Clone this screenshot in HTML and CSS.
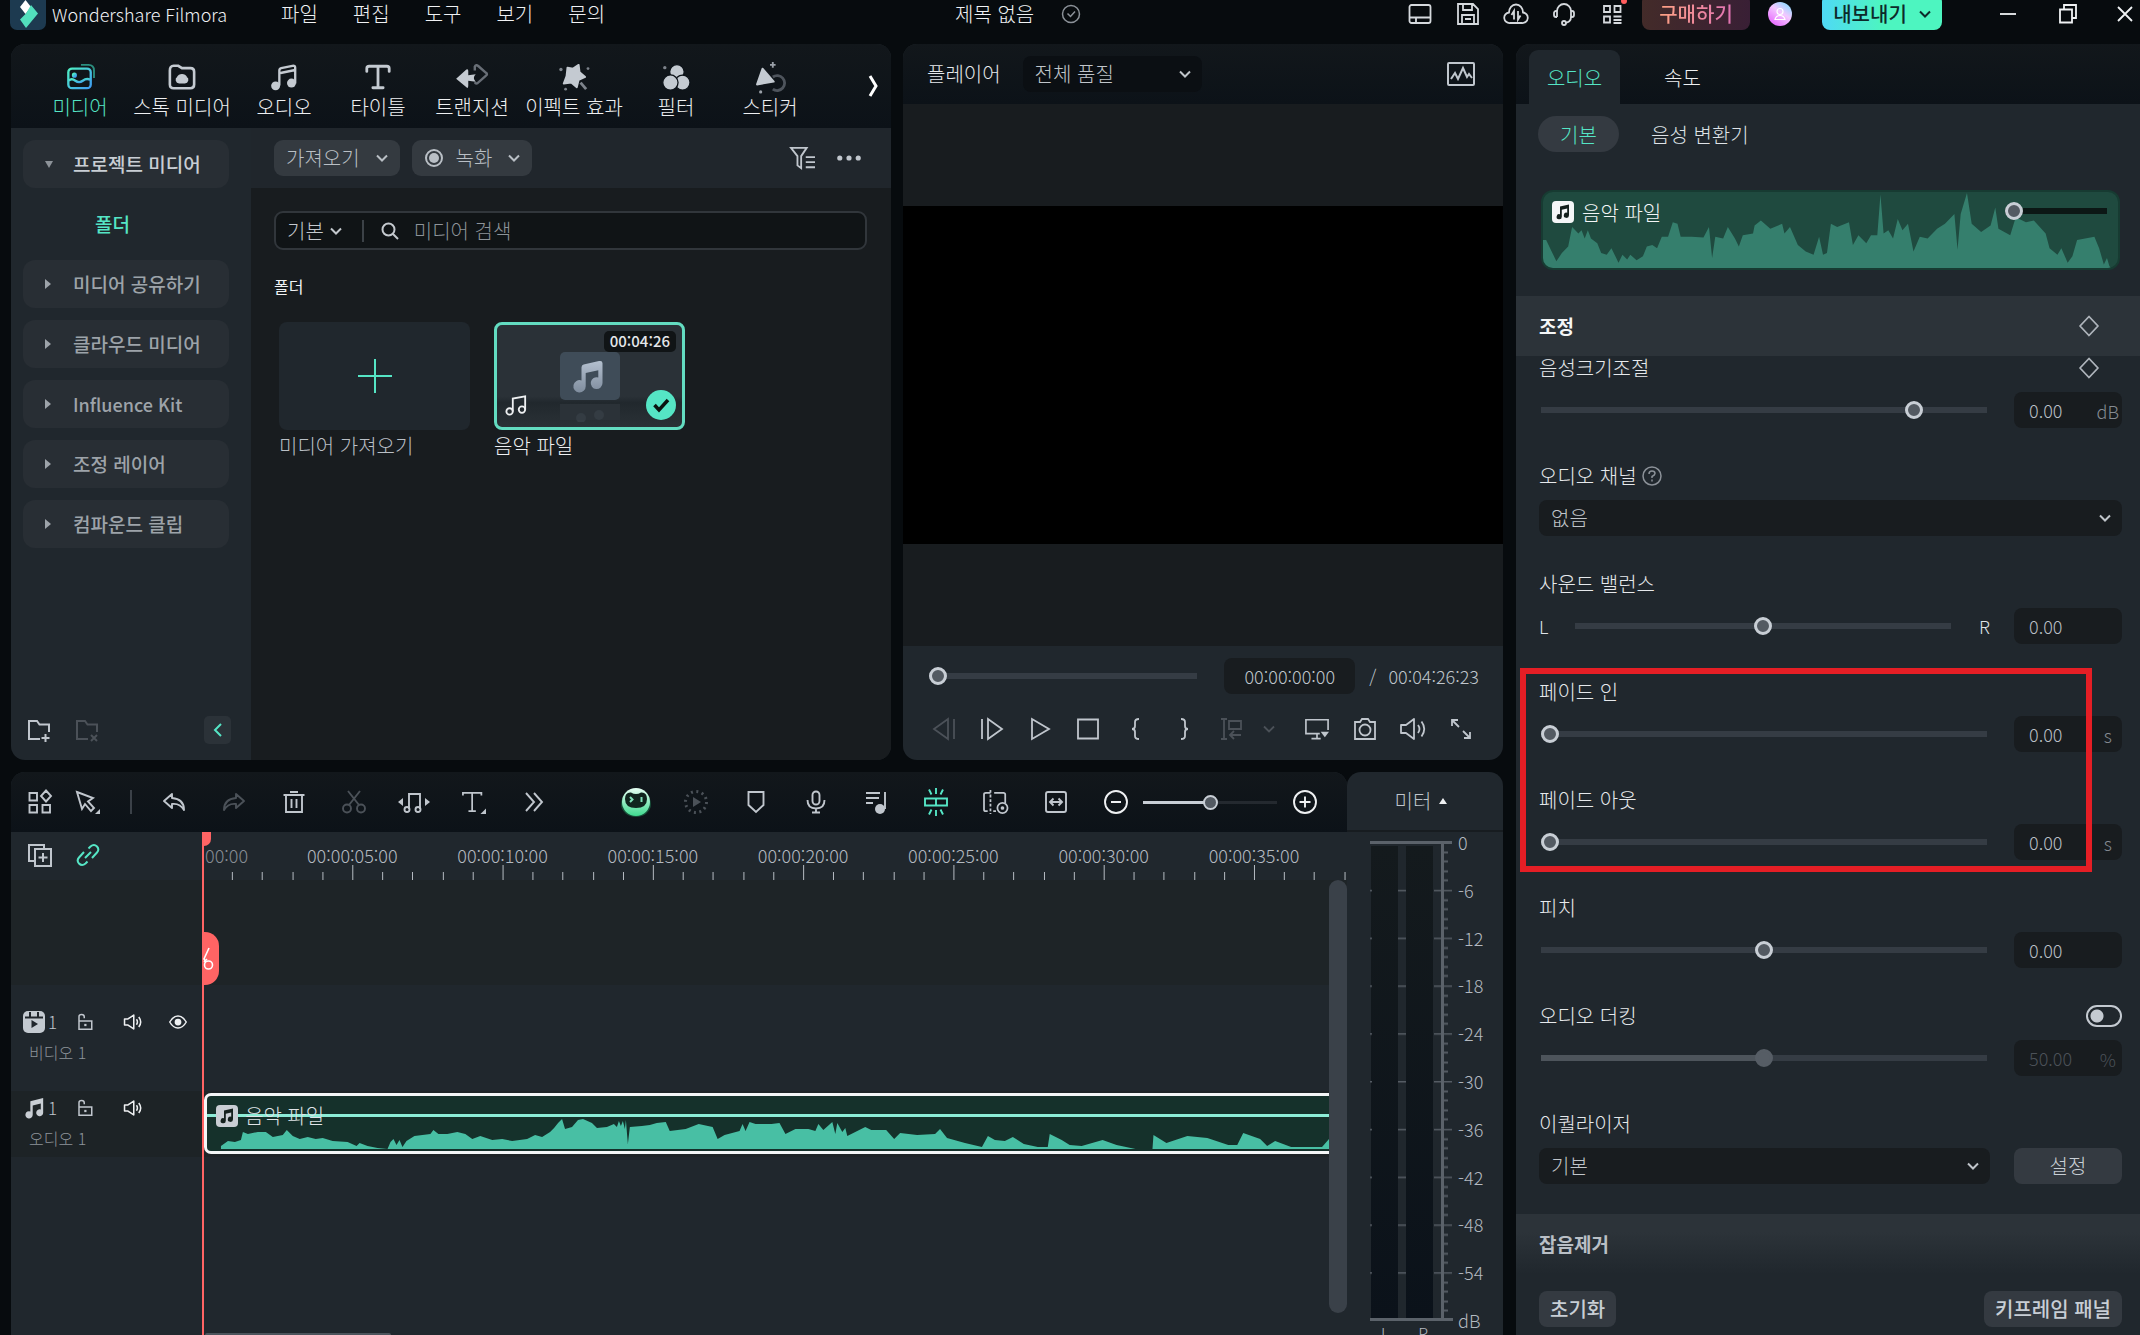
FILE: index.html
```html
<!DOCTYPE html>
<html lang="ko">
<head>
<meta charset="utf-8">
<title>Wondershare Filmora</title>
<link rel="stylesheet" href="styles.css">
</head>
<body>
<svg class="defs" aria-hidden="true">
  <defs>
    <linearGradient id="g-media" x1="0" y1="0" x2="1" y2="1"><stop offset="0" stop-color="#4ff0c4"/><stop offset="1" stop-color="#3f9bf2"/></linearGradient>
    <linearGradient id="g-ava" x1="1" y1="0" x2=".3" y2="1"><stop offset="0" stop-color="#6fe0ff"/><stop offset=".5" stop-color="#f3c8ff"/><stop offset="1" stop-color="#e86bff"/></linearGradient>
    <linearGradient id="g-note" x1="0" y1="0" x2="0" y2="1"><stop offset="0" stop-color="#b4c0cf"/><stop offset="1" stop-color="#7f8d9e"/></linearGradient>
    <linearGradient id="g-bot" x1="0" y1="0" x2="0" y2="1"><stop offset="0" stop-color="#e6fff3"/><stop offset="1" stop-color="#3fd98f"/></linearGradient>
  </defs>
  <symbol id="chev" viewBox="0 0 12 12"><path d="M1 3.500 6 8.500 11 3.500"/></symbol>
  <symbol id="diamond" viewBox="0 0 24 24"><path d="M12 2.500 21 12 12 21.500 3 12Z" stroke-linejoin="round"/></symbol>
  <symbol id="note" viewBox="0 0 24 24"><path fill="currentColor" stroke="none" d="M8 4.500 22 1v16.200a3.800 3.800 0 1 1-2.600-3.600V7.200L10.600 9.400v10a4 4 0 1 1-2.600-3.700Z"/></symbol>
  <symbol id="notebox" viewBox="0 0 22 22"><rect width="22" height="22" rx="4" fill="currentColor" stroke="none"/><path stroke="none" fill="#14201d" d="M8 5.500 17 3.500v10.800a2.600 2.600 0 1 1-1.800-2.500V7.500L9.800 8.700v7a2.600 2.600 0 1 1-1.800-2.500Z"/></symbol>
  <symbol id="speaker" viewBox="0 0 26 24"><path d="M2 8v8h4.500L14 21V3L6.500 8ZM17.500 8.500q2.500 3.500 0 7M20.500 5.500q5 6.500 0 13" stroke-linejoin="round"/></symbol>
  <symbol id="lock" viewBox="0 0 24 24"><path d="M4 10.500h17v11H4ZM4 10V4.500q0-2.500 3.500-2.500T11 5v2"/><rect x="11" y="14.500" width="3" height="3" fill="currentColor" stroke="none"/></symbol>
</svg>

<div class="app">
  <header class="titlebar">
    <div class="tb-left">
      <svg class="logo" viewBox="0 0 36 36"><rect width="36" height="36" rx="7" fill="#1d3a50"/><path d="M10 13 15.500 6 21 13 15.500 20Z" fill="#fff"/><path d="m21 11 7 8.500L16 34l-6-8.500 6-6Z" fill="#52dfbd"/></svg>
      <h1 class="brand">Wondershare Filmora</h1>
      <nav class="menu"><a href="#">파일</a><a href="#">편집</a><a href="#">도구</a><a href="#">보기</a><a href="#">문의</a></nav>
    </div>
    <div class="doc"><span>제목 없음</span>
      <svg class="ic ic20 dim" viewBox="0 0 20 20"><circle cx="10" cy="10" r="8.500"/><path d="m6.500 9.500 3 3L14 7.500"/></svg></div>
    <div class="tb-right">
      <button class="tbi" aria-label="레이아웃"><svg class="ic" viewBox="0 0 24 24"><rect x="1.500" y="3" width="21" height="18" rx="2"/><path d="M2 15.500h20M8 15.500v5"/></svg></button>
      <button class="tbi" aria-label="저장"><svg class="ic" viewBox="0 0 24 24"><path d="M2 2h15l5 5v15H2ZM7 2v6h9V2M6 22v-9h12v9M9 17h6"/></svg></button>
      <button class="tbi" aria-label="클라우드"><svg class="ic" viewBox="0 0 24 24"><path d="M6 21a5 5 0 0 1-1-10.500C5 6 8 2.500 12 2.500s7 3.500 7 8A5 5 0 0 1 18 21ZM10 17.500V9l-2.500 4M14 9v8.500l2.500-4"/></svg></button>
      <button class="tbi" aria-label="고객지원"><svg class="ic" viewBox="0 0 24 24"><path d="M5 15V9a7 7 0 0 1 14 0v6q0 5-6 6M5 9H4a2 2 0 0 0-2 2v2a2 2 0 0 0 2 2h1M19 9h1a2 2 0 0 1 2 2v2a2 2 0 0 1-2 2h-1"/><circle cx="12" cy="21" r="2"/></svg></button>
      <button class="tbi" aria-label="앱"><svg class="ic" viewBox="0 0 24 24"><path d="M4 4h6v6H4ZM14.500 4h6v6h-6ZM4 14.500h6v6H4ZM13.500 14.500h8M13.500 18h8M13.500 21h8"/><circle cx="24" cy="-1" r="3" fill="#ff5c5c" stroke="none"/></svg></button>
      <button class="buy"><span>구매하기</span></button>
      <svg class="avatar" viewBox="0 0 24 24"><circle cx="12" cy="12" r="12" fill="url(#g-ava)"/><circle cx="12" cy="9.500" r="3" fill="none" stroke="#fff" stroke-width="1.200"/><path d="M7 17.500q1-4 5-4t5 4Z" fill="none" stroke="#fff" stroke-width="1.200"/></svg>
      <button class="export">내보내기 <svg class="ic ic12" viewBox="0 0 12 12"><use href="#chev"/></svg></button>
      <button class="win" aria-label="최소화"><svg class="ic" viewBox="0 0 24 24"><path d="M4 12h16"/></svg></button>
      <button class="win" aria-label="이전 크기로"><svg class="ic" viewBox="0 0 24 24"><path d="M4 7.500h12v13H4ZM8 7V3h12v13h-4"/></svg></button>
      <button class="win" aria-label="닫기"><svg class="ic" viewBox="0 0 24 24"><path d="m5 5 14 14M19 5 5 19"/></svg></button>
    </div>
  </header>

  <main class="work">
    <div class="upper">
      <section class="panel media">
        <nav class="mtabs">
          <button class="mtab on"><svg class="ic ic28s" viewBox="0 0 30 30"><g stroke="url(#g-media)" stroke-width="2.500"><rect x="2.500" y="6" width="24" height="21" rx="4"/><circle cx="9" cy="13" r="1.500"/><path d="M3 19q3-3 7 0t8 0 8-1"/></g><path d="M16 2h8q6 0 6 6v8" stroke="#2b8f80" stroke-width="2"/></svg>미디어</button>
          <button class="mtab wide"><svg class="ic ic28s" viewBox="0 0 30 30"><path d="M2 8q0-5 4-5h5l4 2.500h9q4 0 4 4V23q0 4-4 4H6q-4 0-4-4Z" stroke-width="2.800"/><path d="M12 21a3 3 0 0 1-1.500-5.500 5 5 0 0 1 9 0A3 3 0 0 1 18 21Z" fill="currentColor" stroke="currentColor"/></svg>스톡 미디어</button>
          <button class="mtab"><svg class="ic ic28s" viewBox="0 0 30 30"><path d="M10 24V8q0-2 2-2.500l12-2.500q3-.5 3 2v17M10 11l17-3.500" stroke-width="2.500"/><circle cx="6" cy="24.500" r="4.800" fill="currentColor" stroke="none"/><circle cx="23" cy="21.500" r="4.800" fill="currentColor" stroke="none"/></svg>오디오</button>
          <button class="mtab"><svg class="ic ic28s" viewBox="0 0 30 30"><path d="M3 9V6q0-2.500 2.500-2.500h19Q27 3.500 27 6v3M15 4v22M9.500 26.500h11" stroke-width="3" stroke-linecap="round"/></svg>타이틀</button>
          <button class="mtab"><svg class="ic ic28s" viewBox="0 0 30 30"><path d="m-2 17 11-10q2-1 2 1.500V13l8-1q-4 4 0 8l-8-1v5q0 4-2 2Z" fill="currentColor" stroke="none"/><path d="M18 8V4q1-3 4-.5l8 7q2 1.500 0 3l-9 8q-2 1-3-1" stroke="#686e76" stroke-width="2.600"/></svg>트랜지션</button>
          <button class="mtab wide"><svg class="ic ic28s" viewBox="0 0 30 30"><path d="m8 5 6 1 6-4 1 8 6 5-7 3-2 8-6-5-8 1 3-8Z" fill="currentColor" stroke="currentColor" stroke-linejoin="round"/><path d="m22 21 6 7" stroke="#7d838b" stroke-width="3"/><circle cx="1" cy="7" r="1.800" fill="#7d838b" stroke="none"/><circle cx="30" cy="6" r="1.500" fill="#7d838b" stroke="none"/><circle cx="6" cy="28" r="1.500" fill="#7d838b" stroke="none"/></svg>이펙트 효과</button>
          <button class="mtab"><svg class="ic ic28s" viewBox="0 0 30 30"><g fill="currentColor" stroke="#0d1319" stroke-width="1.400"><circle cx="16" cy="9.500" r="7.800"/><circle cx="22" cy="21" r="8"/><circle cx="9" cy="21" r="8.200"/></g><circle cx="3" cy="5" r="1.800" fill="#7d838b" stroke="none"/></svg>필터</button>
          <button class="mtab"><svg class="ic ic28s" viewBox="0 0 30 30"><path d="M18 15a8 8 0 1 1 0 13" stroke="#4e545c" stroke-width="3"/><path d="M7 6 19 20 1 23Z" fill="currentColor" stroke="currentColor" stroke-linejoin="round"/><path d="M18-1v6M15 2h6" stroke="#9aa0a8"/><circle cx="5" cy="31" r="1.700" fill="#9aa0a8" stroke="none"/></svg>스티커</button>
          <button class="more" aria-label="더 보기"><svg class="ic" viewBox="0 0 24 24"><path d="m9 2 6 10-6 10" stroke-width="3"/></svg></button>
        </nav>
        <div class="mbody">
          <aside class="side">
            <button class="sitem open"><i class="caret down"></i>프로젝트 미디어</button>
            <a class="sfolder" href="#">폴더</a>
            <button class="sitem"><i class="caret"></i>미디어 공유하기</button>
            <button class="sitem"><i class="caret"></i>클라우드 미디어</button>
            <button class="sitem"><i class="caret"></i><span class="latin">Influence Kit</span></button>
            <button class="sitem"><i class="caret"></i>조정 레이어</button>
            <button class="sitem"><i class="caret"></i>컴파운드 클립</button>
            <div class="sfoot">
              <button class="plain" aria-label="새 폴더"><svg class="ic" viewBox="0 0 24 24"><path d="M13 21H2V3h8l2.500 3.500H22V14M18.500 16v8M14.500 20h8"/></svg></button>
              <button class="plain off" aria-label="폴더 삭제"><svg class="ic" viewBox="0 0 24 24"><path d="M13 21H2V3h8l2.500 3.500H22V14M16 17l6 6M22 17l-6 6"/></svg></button>
              <button class="fold" aria-label="접기"><svg class="ic ic16" viewBox="0 0 16 16"><path d="M11 2 5 8l6 6"/></svg></button>
            </div>
          </aside>
          <div class="lib">
            <div class="lbar">
              <button class="chip">가져오기 <svg class="ic ic12" viewBox="0 0 12 12"><use href="#chev"/></svg></button>
              <button class="chip"><svg class="ic ic20" viewBox="0 0 20 20"><circle cx="10" cy="10" r="8"/><circle cx="10" cy="10" r="5" fill="currentColor" stroke="none"/></svg>녹화 <svg class="ic ic12" viewBox="0 0 12 12"><use href="#chev"/></svg></button>
              <button class="plain push" aria-label="필터"><svg class="ic ic28" viewBox="0 0 28 26"><path d="M1 2h17l-6 9v13l-4-3V11ZM17 12h10M17 17.500h10M17 23h10"/></svg></button>
              <button class="plain" aria-label="메뉴"><svg class="ic ic28" viewBox="0 0 28 26"><g fill="currentColor" stroke="none"><circle cx="4" cy="13" r="2.800"/><circle cx="14" cy="13" r="2.800"/><circle cx="24" cy="13" r="2.800"/></g></svg></button>
            </div>
            <div class="search">
              <button class="sel">기본 <svg class="ic ic12" viewBox="0 0 12 12"><use href="#chev"/></svg></button>
              <svg class="ic ic18" viewBox="0 0 18 18"><circle cx="7.500" cy="7.500" r="6"/><path d="m12 12 5 5"/></svg>
              <input type="text" placeholder="미디어 검색" aria-label="미디어 검색">
            </div>
            <h2 class="ftitle">폴더</h2>
            <div class="thumbs">
              <button class="thumb"><span class="tbox add"><svg class="ic ic34" viewBox="0 0 34 34"><path d="M17 0v34M0 17h34"/></svg></span>미디어 가져오기</button>
              <button class="thumb sel-t"><span class="tbox pic">
                <svg class="tile" viewBox="0 0 60 70"><rect width="60" height="48" rx="5" fill="#3f4c58"/><rect y="52" width="60" height="16" fill="#2b3238"/><circle cx="21" cy="66" r="5" fill="#343c43"/><circle cx="39" cy="63" r="5" fill="#343c43"/><g transform="translate(11 7) scale(1.400)"><path fill="url(#g-note)" d="M7.500 6q0-1.500 1.500-2L20 1.500q2.500-.5 2.500 1.500v14.200a4.200 4.200 0 1 1-3-4V8L10.500 10v9.400a4.400 4.400 0 1 1-3-4.100Z"/></g></svg>
                <span class="dur">00:04:26</span>
                <svg class="tnote ic" viewBox="0 0 24 24"><circle cx="5" cy="19" r="3.500"/><circle cx="18.500" cy="17" r="3.500"/><path d="M8.500 19V5L22 2.500V17"/></svg>
                <svg class="tick" viewBox="0 0 30 30"><circle cx="15" cy="15" r="15" fill="#55e5c5"/><path d="m8.500 15 4.500 5 9-10" fill="none" stroke="#0b1310" stroke-width="3.500"/></svg>
              </span>음악 파일</button>
            </div>
          </div>
        </div>
      </section>

      <section class="panel player">
        <div class="phead">
          <h2>플레이어</h2>
          <div class="select psel"><select aria-label="재생 품질"><option>전체 품질</option></select><svg class="ic ic12" viewBox="0 0 12 12"><use href="#chev"/></svg></div>
          <button class="plain push" aria-label="스코프"><svg class="ic ic28" viewBox="0 0 28 24"><rect x="1" y="1" width="26" height="22" rx="1"/><path d="m4 17 4-6 3 6 5-11 4 9 2-3 3 4"/></svg></button>
        </div>
        <div class="view"><div class="frame"></div></div>
        <div class="pctl">
          <div class="seek">
            <input type="range" value="0" aria-label="재생 위치">
            <input class="tc" type="text" value="00:00:00:00" aria-label="현재 시간"><span class="slash">/</span><span class="total">00:04:26:23</span>
          </div>
          <div class="pbtns">
            <button class="off" aria-label="이전 프레임"><svg class="ic" viewBox="0 0 24 24"><path d="M16 2v20L2 12ZM22 2v20"/></svg></button>
            <button aria-label="다음 프레임"><svg class="ic" viewBox="0 0 24 24"><path d="M2 2v20M8 2v20l14-10Z"/></svg></button>
            <button aria-label="재생"><svg class="ic" viewBox="0 0 24 24"><path d="M4 2v20l17-10Z"/></svg></button>
            <button aria-label="정지"><svg class="ic" viewBox="0 0 24 24"><path d="M2 2.500h20v19H2Z"/></svg></button>
            <button aria-label="시작점"><svg class="ic" viewBox="0 0 24 24"><path d="M15 2q-4 0-4 3v4q0 3-3 3 3 0 3 3v4q0 3 4 3"/></svg></button>
            <button aria-label="끝점"><svg class="ic" viewBox="0 0 24 24"><path d="M9 2q4 0 4 3v4q0 3 3 3-3 0-3 3v4q0 3-4 3"/></svg></button>
            <button class="off" aria-label="삽입"><svg class="ic" viewBox="0 0 24 24"><path d="M1 2h6M4 2v20M1 22h6M9 4h12v8H9ZM21 18H10m4-4-4 4 4 4"/></svg></button>
            <button class="slim off" aria-label="더보기"><svg class="ic ic12" viewBox="0 0 12 12"><use href="#chev"/></svg></button>
            <button class="push" aria-label="화면"><svg class="ic" viewBox="0 0 26 24"><path d="M25 13V2H1v15h15M13 17v5M7 22.500h10"/><path d="M17 15h9l-4.500 6Z" fill="currentColor" stroke="none"/></svg></button>
            <button aria-label="스냅샷"><svg class="ic" viewBox="0 0 24 24"><path d="M2 5h5l2-3h6l2 3h5v17H2Z"/><circle cx="12" cy="13" r="5.500"/></svg></button>
            <button aria-label="음량"><svg class="ic" viewBox="1 1 24 22"><path d="M1 8v8h5L14 22V2L6 8ZM18 8q3 4 0 8M21.500 4.500q5.500 7.500 0 15" stroke-linejoin="round"/></svg></button>
            <button aria-label="전체화면"><svg class="ic" viewBox="0 0 24 24"><path d="M3 9V3h6M3 3l7 7M21 15v6h-6M21 21l-7-7"/></svg></button>
          </div>
        </div>
      </section>
    </div>

    <div class="lower">
      <section class="panel timeline">
        <div class="ttools">
          <button class="n48" aria-label="레이아웃"><svg class="ic" viewBox="0 0 24 24"><path d="M1.500 3h7.500v7.500H1.500ZM1.500 15h7.500v7.500H1.500ZM14.500 15H22v7.500h-7.500ZM18 .500 23 6l-5 5.500L13 6Z"/></svg></button>
          <button class="n48" aria-label="선택"><svg class="ic" viewBox="0 0 24 24"><path d="m1 2 16 6-5 3.500 6 6.500-3 3-6-7-3 5Z"/><path d="M24 19v5h-5Z" fill="currentColor" stroke="none"/></svg></button>
          <i class="bar"></i>
          <button aria-label="실행 취소"><svg class="ic" viewBox="0 0 24 24"><path d="M10 4 2 11l8 7v-4q8-1 12 6 0-11-12-12Z" stroke-linejoin="round"/></svg></button>
          <button class="off" aria-label="다시 실행"><svg class="ic" viewBox="0 0 24 24"><path d="m14 4 8 7-8 7v-4q-8-1-12 6Q2 9 14 8Z" stroke-linejoin="round"/></svg></button>
          <button aria-label="삭제"><svg class="ic" viewBox="0 0 24 24"><path d="M1.500 5h21M8 2h8M4 5v17h16V5M9.500 9v9M14.500 9v9"/></svg></button>
          <button class="off" aria-label="분할"><svg class="ic" viewBox="0 0 24 24"><circle cx="5" cy="18.500" r="4"/><circle cx="19" cy="18.500" r="4"/><path d="m6 1 11 14M18 1 7 15"/></svg></button>
          <button aria-label="오디오"><svg class="ic ic32" viewBox="0 0 32 24"><path d="M11 19V4h11v15"/><circle cx="9" cy="19.500" r="2.500"/><circle cx="20" cy="19.500" r="2.500"/><path d="m5 8-5 4 5 4ZM27 8l5 4-5 4Z" fill="currentColor" stroke="none"/></svg></button>
          <button aria-label="텍스트"><svg class="ic ic28" viewBox="0 0 28 26"><path d="M2 6V3h20v3M12 3v20M8 23h8"/><path d="M27 20v6h-6Z" fill="currentColor" stroke="none"/></svg></button>
          <button aria-label="더 많은 도구"><svg class="ic" viewBox="0 0 24 24"><path d="m4 3 8 9-8 9M12 3l8 9-8 9"/></svg></button>
          <button class="gapl" aria-label="AI"><svg class="ic30" viewBox="0 0 30 30"><ellipse cx="15" cy="17" rx="15" ry="13" fill="#1f8a58" opacity=".5"/><circle cx="15" cy="15" r="14" fill="url(#g-bot)"/><path d="M4 12q0-7 6-6.500 5 3 10 0 6-.5 6 6.500 0 9-11 9T4 12Z" fill="#10251e"/><path d="m9 10 2.500 2.500L9 15M20.500 10v5" fill="none" stroke="#7fe0b8" stroke-width="2"/></svg></button>
          <button class="off" aria-label="렌더"><svg class="ic" viewBox="0 0 24 24"><circle cx="12" cy="12" r="10.500" stroke-dasharray="2 3.500" stroke-width="3"/><path d="M9 7v10l8-5Z" fill="currentColor" stroke="none"/></svg></button>
          <button aria-label="마커"><svg class="ic" viewBox="0 0 24 24"><path d="M4.500 2h15v13L12 22l-7.500-7Z"/></svg></button>
          <button aria-label="녹음"><svg class="ic" viewBox="0 0 24 24"><rect x="8.500" y="1.500" width="7" height="13" rx="3.500"/><path d="M3.500 10q0 8.500 8.500 8.500T20.500 10M12 18.500v4M8 22.500h8"/></svg></button>
          <button aria-label="오디오 믹서"><svg class="ic" viewBox="0 0 24 24"><path d="M2 3h14M2 8h13M2 13h7M21 2v17"/><circle cx="16" cy="19" r="5" fill="currentColor" stroke="none"/></svg></button>
          <button class="green" aria-label="자동 스냅"><svg class="ic" viewBox="0 0 24 24"><path d="M1 8.500h22v7H1ZM12 8.500v7M12-2v6M12 20v6M5-.5l2.500 5M19-.5l-2.500 5M5 24.500l2.500-5M19 24.500l-2.500-5"/></svg></button>
          <button aria-label="미리보기"><svg class="ic ic28" viewBox="0 0 28 26"><path d="M8 3H3q-2 0-2 2v16q0 2 2 2h2M12 3h10q2 0 2 2v9M11 23h3"/><path d="M8 0v26" stroke-dasharray="3 2"/><circle cx="21" cy="19.500" r="5.500"/><circle cx="21" cy="19.500" r="2" fill="currentColor" stroke="none"/></svg></button>
          <button aria-label="맞춤"><svg class="ic" viewBox="0 0 24 24"><rect x="2" y="2" width="20" height="20" rx="2"/><path d="M6 12h12M9.500 8.500 6 12l3.500 3.500M14.500 8.500 18 12l-3.500 3.500"/></svg></button>
          <button class="lite" aria-label="축소"><svg class="ic" viewBox="0 0 24 24"><circle cx="12" cy="12" r="11"/><path d="M7 12h10"/></svg></button>
          <input class="zoom" type="range" value="50" aria-label="확대 수준">
          <button class="lite" aria-label="확대"><svg class="ic" viewBox="0 0 24 24"><circle cx="12" cy="12" r="11"/><path d="M6.500 12h11M12 6.500v11"/></svg></button>
        </div>
        <div class="tgrid">
          <div class="heads">
            <div class="hrow htop">
              <button class="plain" aria-label="트랙 추가"><svg class="ic" viewBox="0 0 24 24"><path d="M7 18H1V2h15v3M7 6h16v17H7ZM15 10v9M10.500 14.500h9"/></svg></button>
              <button class="plain green" aria-label="연결"><svg class="ic" viewBox="0 0 24 24"><path d="m8 9-5 5.500a4.500 4.500 0 0 0 0 6q3 3 6.500 0l2-2M16 15l5-5.500a4.500 4.500 0 0 0 0-6q-3-3-6.500 0l-2 2M9 15l6-6"/></svg></button>
            </div>
            <div class="hrow hempty"></div>
            <div class="hrow hvideo">
              <div class="hicons">
                <span class="tname"><svg class="ic22" viewBox="0 0 22 22"><rect width="22" height="22" rx="5" fill="#c4cad1"/><path d="M2 6.500h18M7 1v5M15 1v5" stroke="#20262c" stroke-width="2"/><path d="M8.500 9v8l6.500-4Z" fill="#20262c"/></svg>1</span>
                <svg class="ic ic18" viewBox="0 0 24 24"><use href="#lock"/></svg>
                <svg class="ic ic20 lite" viewBox="0 0 26 24"><use href="#speaker"/></svg>
                <svg class="ic ic18 lite" viewBox="0 0 24 24"><path d="M1 12q4.500-8 11-8t11 8q-4.500 8-11 8T1 12Z"/><circle cx="12" cy="12" r="4.500" fill="currentColor" stroke="none"/></svg>
              </div>
              <p>비디오 1</p>
            </div>
            <div class="hrow haudio">
              <div class="hicons">
                <span class="tname"><svg class="ic22 nt" viewBox="0 0 24 24"><use href="#note"/></svg>1</span>
                <svg class="ic ic18" viewBox="0 0 24 24"><use href="#lock"/></svg>
                <svg class="ic ic20 lite" viewBox="0 0 26 24"><use href="#speaker"/></svg>
              </div>
              <p>오디오 1</p>
            </div>
          </div>
          <div class="tracks">
            <div class="ruler">
              <svg class="ticks" viewBox="0 0 1200 48" preserveAspectRatio="none"><defs><pattern id="tk" width="150" height="48" patternUnits="userSpaceOnUse"><path d="M.5 33v15M30.500 40v8M60.500 40v8M90.500 40v8M120.500 40v8" stroke="#b5bbc2"/></pattern></defs><rect width="1200" height="48" fill="url(#tk)"/></svg>
              <span class="zero">00:00</span><span>00:00:05:00</span><span>00:00:10:00</span><span>00:00:15:00</span><span>00:00:20:00</span><span>00:00:25:00</span><span>00:00:30:00</span><span>00:00:35:00</span>
            </div>
            <div class="lane lempty"></div>
            <div class="lane lvideo"></div>
            <div class="lane laudio">
              <div class="clip">
                <svg class="wave" viewBox="0 0 1125 34" preserveAspectRatio="none"><path fill="#48bfa4" d="M14 34V31L21 26 28 27 34 25 36 17 41 19 51 17 59 17 66 22 76 20 80 15 86 21 93 24 101 22 109 24 116 23 126 26 141 27 150 31 153 28 161 31 171 33 181 34 184 27 187 24 190 30 193 25 196 32 200 26 208 21 216 20 224 19 227 15 232 19 241 19 251 17 259 19 266 24 274 21 286 25 296 24 306 26 321 24 329 20 336 22 344 17 348 13 352 8 356 4 359 14 366 12 372 5 377 4 386 8 391 13 401 12 408 9 411 12 413 6 415 11 417 6 419 14 420 5 422 29 424 12 436 11 444 10 451 8 460 7 464 16 480 14 493 9 507 12 512 24 519 20 534 16 537 9 540 16 544 7 550 9 566 9 574 8 580 19 590 14 603 14 610 16 613 9 618 15 627 7 630 19 632 8 637 17 640 13 642 21 650 17 660 12 666 15 681 15 689 24 695 18 712 20 730 19 735 14 742 23 760 28 777 32 783 21 790 25 800 26 808 22 819 29 833 32 843 32 845 19 851 22 857 25 865 30 877 31 898 25 912 30 931 34H948L949 20 962 28 983 21 1003 23 1024 30 1033 30 1039 18 1056 24 1063 31 1071 26 1087 32 1118 32 1125 24V34Z"/></svg>
                <i class="vol"></i>
                <span class="cname"><svg class="ic22" viewBox="0 0 22 22"><use href="#notebox"/></svg>음악 파일</span>
              </div>
            </div>
            <i class="hscroll"></i>
            <i class="vscroll"></i>
            <div class="playhead"><i class="ph-top"></i><span class="ph-cut"><svg class="ic" viewBox="0 0 15 24"><path d="M6 1 1 12l2 3M1 15l3-3"/><circle cx="5.500" cy="18" r="4"/></svg></span></div>
          </div>
        </div>
      </section>

      <section class="panel meter">
        <button class="mhead">미터 <i></i></button>
        <div class="mbox">
          <div class="mscale">
            <i class="mbar"></i><i class="mbar"></i>
            <svg class="mticks" viewBox="0 0 84 482" preserveAspectRatio="none"><defs><pattern id="mt" width="84" height="48" patternUnits="userSpaceOnUse" y="1"><path d="M0 0h2M28 0h8M64 0h18" stroke="#555c64" stroke-width="3"/><path d="M72 10.500h6M72 19.500h6M72 29.500h6M72 38.500h6" stroke="#555c64" stroke-width="2"/></pattern></defs><rect y="1" width="84" height="480" fill="url(#mt)"/><path d="M0 1.500h82M0 480.500h83M72.500 1v480" stroke="#5b626a" stroke-width="3"/></svg>
          </div>
          <div class="mnums"><span>0</span><span>-6</span><span>-12</span><span>-18</span><span>-24</span><span>-30</span><span>-36</span><span>-42</span><span>-48</span><span>-54</span><span>dB</span></div>
        </div>
        <div class="lr"><span>L</span><span>R</span></div>
      </section>
    </div>
  </main>

  <aside class="panel props">
    <nav class="ptabs"><button class="on">오디오</button><button>속도</button></nav>
    <div class="pills"><button class="on">기본</button><button>음성 변환기</button></div>
    <div class="pclip">
      <svg class="pwave" viewBox="811 572 731 234" preserveAspectRatio="none"><path fill="#357f6d" d="M811 806V720L815 720 822 755 828 785 835 760 843 740 848 680 856 700 860 690 864 715 868 690 872 715 880 730 885 760 892 765 898 745 903 770 907 790 912 765 918 780 922 765 930 782 938 770 943 740 950 735 956 745 962 710 970 710 976 665 982 670 986 710 1000 710 1015 712 1022 680 1026 775 1030 710 1040 715 1046 680 1055 715 1060 740 1065 705 1078 700 1080 675 1088 660 1100 685 1115 670 1118 700 1125 680 1135 735 1145 755 1155 765 1162 710 1167 765 1172 760 1177 670 1185 680 1200 665 1205 735 1212 705 1222 730 1228 705 1236 705 1240 580 1244 700 1250 690 1256 715 1262 655 1268 690 1275 670 1282 755 1290 710 1300 715 1312 685 1322 670 1334 640 1338 750 1342 640 1350 575 1356 670 1368 695 1380 675 1386 620 1390 685 1405 705 1412 650 1425 665 1435 660 1450 700 1455 745 1465 765 1470 745 1478 790 1484 770 1490 720 1512 710 1518 745 1524 795 1528 775 1531 800 1533 806Z"/></svg>
      <svg class="ic22" viewBox="0 0 22 22"><use href="#notebox"/></svg><span>음악 파일</span>
      <input type="range" value="0" aria-label="클립 음량">
    </div>
    <div class="sec"><h2>조정</h2><svg class="ic" viewBox="0 0 24 24"><use href="#diamond"/></svg></div>

    <div class="group"><div class="lab"><label for="v1">음성크기조절</label><svg class="ic kf" viewBox="0 0 24 24"><use href="#diamond"/></svg></div>
      <div class="ctl"><input type="range" id="v1" value="85"><span class="num"><input type="text" value="0.00" aria-label="음성크기조절 값"><i>dB</i></span></div></div>
    <div class="group"><div class="lab"><label for="ch">오디오 채널</label><svg class="ic ic20 dim" viewBox="0 0 20 20"><circle cx="10" cy="10" r="9"/><path d="M7 8q0-3 3-3t3 2.500Q13 9 10 10.500V12M10 13.500v2"/></svg></div>
      <div class="ctl"><div class="select"><select id="ch"><option>없음</option></select><svg class="ic ic12" viewBox="0 0 12 12"><use href="#chev"/></svg></div></div></div>
    <div class="group"><div class="lab"><label for="v2">사운드 밸런스</label></div>
      <div class="ctl bal"><span>L</span><input type="range" id="v2" value="50"><span>R</span><span class="num"><input type="text" value="0.00" aria-label="사운드 밸런스 값"></span></div></div>
    <div class="marked">
      <div class="group"><div class="lab"><label for="v3">페이드 인</label></div>
        <div class="ctl"><input type="range" id="v3" value="0"><span class="num"><input type="text" value="0.00" aria-label="페이드 인 값"><i class="s">s</i></span></div></div>
      <div class="group"><div class="lab"><label for="v4">페이드 아웃</label></div>
        <div class="ctl"><input type="range" id="v4" value="0"><span class="num"><input type="text" value="0.00" aria-label="페이드 아웃 값"><i class="s">s</i></span></div></div>
    </div>
    <div class="group"><div class="lab"><label for="v5">피치</label></div>
      <div class="ctl"><input type="range" id="v5" value="50"><span class="num"><input type="text" value="0.00" aria-label="피치 값"></span></div></div>
    <div class="group"><div class="lab"><label for="duck">오디오 더킹</label><input class="toggle" type="checkbox" id="duck"></div>
      <div class="ctl"><input type="range" class="duck" value="50" disabled aria-label="더킹 정도"><span class="num"><input type="text" value="50.00" disabled aria-label="더킹 값"><i class="pc">%</i></span></div></div>
    <div class="group eq"><div class="lab"><label for="eq">이퀄라이저</label></div>
      <div class="ctl"><div class="select"><select id="eq"><option>기본</option></select><svg class="ic ic12" viewBox="0 0 12 12"><use href="#chev"/></svg></div><button class="set">설정</button></div></div>
    <div class="sec fade"><h2>잡음제거</h2></div>
    <div class="pfoot"><button>초기화</button><button>키프레임 패널</button></div>
  </aside>
</div>
</body>
</html>
```
FILE: styles.css
```css
* { box-sizing: border-box; }
html, body { height: 100%; }
body {
  margin: 0;
  background: #070b0e;
  color: #dfe3e7;
  font: 300 20px/24px "Noto Sans CJK KR", sans-serif;
  overflow: hidden;
}
button, input, select { font: inherit; color: inherit; }
button { background: none; border: 0; padding: 0; display: flex; align-items: center; justify-content: center; white-space: nowrap; }
h1, h2, p { margin: 0; font-size: inherit; font-weight: inherit; }
a { color: inherit; text-decoration: none; }
i { font-style: normal; }

/* icons */
.defs { position: absolute; width: 0; height: 0; }
.ic { width: 24px; height: 24px; fill: none; stroke: currentColor; stroke-width: 2; flex: none; overflow: visible; }
.ic12 { width: 12px; height: 12px; }
.ic16 { width: 16px; height: 16px; }
.ic18 { width: 18px; height: 18px; }
.ic20 { width: 20px; height: 20px; }
.ic22 { width: 22px; height: 22px; flex: none; }
.ic28 { width: 28px; height: 24px; }
.ic28s { width: 28px; height: 28px; }
.ic30 { width: 30px; height: 30px; }
.ic32 { width: 32px; height: 24px; }
.ic34 { width: 34px; height: 34px; }
.dim { color: #8b9198; stroke-width: 1.5; }
.plain, .ttools, .pbtns { color: #c0c6cd; }
.off { color: #4b5158; }
.lite { color: #eef0f2; }
.green { color: #55e5c5; }
.push { margin-left: auto; }

/* page frame */
.app {
  height: 100vh;
  display: grid;
  grid-template: 44px minmax(0, 1fr) / minmax(0, 1fr) 624px;
  column-gap: 13px;
}
.work { display: grid; grid-template-rows: 716px minmax(0, 1fr); gap: 12px; padding-left: 11px; min-height: 0; }
.upper { display: grid; grid-template-columns: 880fr 600fr; gap: 12px; min-height: 0; }
.lower { display: grid; grid-template-columns: minmax(0, 1fr) 156px; min-height: 0; }
.panel { background: #20272d; border-radius: 14px; overflow: hidden; display: flex; flex-direction: column; min-width: 0; min-height: 0; }
.lower .panel { border-radius: 14px 14px 0 0; }

/* title bar */
.titlebar { grid-column: 1 / -1; display: grid; grid-template-columns: 955px minmax(0, 1fr) auto; height: 28px; align-items: center; color: #f0f2f4; }
.tb-left, .tb-right, .doc, .menu { display: flex; align-items: center; height: 28px; }
.tb-left { padding-left: 10px; }
.logo { width: 36px; height: 36px; margin-top: -4px; }
.brand { margin-left: 6px; font-size: 18px; width: 229px; }
.menu { gap: 35px; }
.doc { gap: 27px; }
.tbi { width: 48px; height: 28px; color: #d5d9dd; }
.tbi .ic { stroke-width: 1.8; }
.buy { width: 108px; height: 36px; margin: 0 18px 0 6px; border-radius: 8px; background: linear-gradient(90deg, #432b29, #391f35); }
.buy, .export { font-weight: 500; margin-top: -4px; padding-top: 4px; }
.buy span { background: linear-gradient(90deg, #ffa283, #e072b4); background-clip: text; color: transparent; }
.avatar { width: 24px; height: 24px; margin-right: 30px; }
.export { width: 120px; height: 36px; gap: 12px; margin-right: 36px; border-radius: 8px; background: linear-gradient(90deg, #4fd9f5, #4df5c0 50%); color: #0d2a2a; }
.win { width: 60px; height: 28px; }
.win:last-child { width: 42px; padding-left: 12px; }
.win .ic { stroke-width: 1.8; }

/* media panel */
.mtabs { height: 84px; flex: none; display: flex; padding: 0 6px 0 22px; background: linear-gradient(#12171b, #0c1218); }
.mtab { width: 94px; flex-direction: column; justify-content: flex-start; gap: 4px; padding-top: 19px; color: #eef0f2; }
.mtab.wide { width: 110px; }
.mtab .ic { color: #c4cad1; }
.mtab.on { color: #55e5c5; }
.more { margin-left: auto; width: 24px; color: #fff; }
.mbody { flex: 1; display: grid; grid-template-columns: 240px minmax(0, 1fr); min-height: 0; }
.side { padding: 12px 22px 16px 12px; display: flex; flex-direction: column; gap: 12px; color: #9da3a9; font-size: 19px; font-weight: 500; }
.sitem { height: 48px; border-radius: 12px; background: #282e34; justify-content: flex-start; padding-left: 22px; }
.sitem.open { color: #c9ced4; }
.latin { font-size: 18px; }
.caret { width: 28px; flex: none; }
.caret::before { content: ""; display: block; width: 0; border: 5px solid transparent; border-left: 6px solid #9da3a9; border-right: 0; }
.caret.down::before { border: 4px solid transparent; border-top: 7px solid #8d9399; border-bottom: 0; }
.sfolder { height: 48px; line-height: 48px; padding-left: 72px; color: #55e5c5; }
.sfoot { margin-top: auto; display: flex; align-items: center; gap: 24px; padding-left: 4px; }
.fold { width: 27px; height: 28px; margin: 0 -2px 0 auto; border-radius: 5px; background: #2b3238; color: #55e5c5; }
.lib { background: #181c1f; }
.lbar { height: 60px; padding: 0 28px 0 23px; display: flex; align-items: center; gap: 12px; background: #20262c; }
.lbar .plain + .plain { margin-left: 6px; }
.chip { height: 36px; padding: 0 12px; gap: 16px; border-radius: 9px; background: #343a40; color: #b9bfc5; }
.chip .ic20 { margin-right: -4px; }
.search { margin: 23px 24px 0 23px; height: 39px; display: flex; align-items: center; border: 2px solid #31363b; border-radius: 9px; background: #101416; color: #c4c9ce; padding-left: 11px; }
.search .sel { gap: 6px; padding-right: 20px; border-right: 2px solid #3c4247; height: 22px; margin-right: 17px; }
.search input { flex: 1; min-width: 0; height: 30px; margin-left: 15px; padding: 0; background: none; border: 0; outline: 0; }
.search input::placeholder { color: #8d9399; opacity: 1; }
.ftitle { font-size: 16px; margin: 24px 0 0 23px; color: #f0f2f4; font-weight: 400; }
.thumbs { display: flex; gap: 24px; margin: 24px 0 0 28px; }
.thumb { width: 191px; flex-direction: column; align-items: flex-start; gap: 4px; color: #b9bfc5; }
.sel-t { color: #eef0f2; }
.tbox { position: relative; width: 100%; height: 108px; border-radius: 8px; background: #20272d; display: flex; align-items: center; justify-content: center; color: #55e5c5; }
.pic { border: 3px solid #63dcc1; background: linear-gradient(#2a3137 70%, #21282d 76%, #2a3136); }
.tile { width: 60px; height: 70px; margin-top: 22px; }
.dur { position: absolute; right: 6px; top: 6px; height: 21px; line-height: 20px; padding: 0 6px; border-radius: 5px; background: #101416; color: #e4e7ea; font-size: 15px; font-weight: 500; }
.tnote { position: absolute; left: 8px; bottom: 11px; width: 22px; height: 22px; color: #eef0f2; }
.tick { position: absolute; right: 6px; bottom: 7px; width: 30px; height: 30px; }

/* drop-downs and sliders */
.select { display: grid; align-items: center; height: 36px; flex: 1; border-radius: 8px; background: #181c1f; color: #c0c5ca; }
.select > * { grid-area: 1 / 1; }
.select select { appearance: none; width: 100%; height: 36px; border: 0; background: none; padding: 0 12px; outline: 0; }
.select .ic { justify-self: end; margin-right: 11px; pointer-events: none; }
input[type=range] { appearance: none; flex: 1; min-width: 0; height: 20px; margin: 0; background: linear-gradient(#353c44, #353c44) center / 100% 6px no-repeat; border-radius: 3px; }
input[type=range]::-webkit-slider-thumb { appearance: none; width: 18px; height: 18px; border-radius: 50%; border: 3px solid #c8ced5; background: #535a62; }

/* player */
.phead { height: 60px; flex: none; display: flex; align-items: center; padding: 0 28px 0 24px; background: linear-gradient(#12171b, #0c1218); color: #e6e9ec; }
.psel { flex: none; width: 179px; margin-left: 22px; background: #0b0f13; }
.view { flex: 1; display: flex; align-items: center; background: #181c1f; }
.frame { width: 100%; aspect-ratio: 600 / 338; background: #000; }
.pctl { height: 114px; flex: none; padding-top: 12px; }
.seek { display: flex; align-items: center; padding: 0 24px 0 26px; font-size: 18px; color: #bfc5cb; }
.seek .tc { width: 131px; height: 36px; margin-left: 27px; border: 0; border-radius: 8px; background: #181c1f; padding: 0; text-align: center; }
.slash { margin: 0 12px 0 14px; }
.pbtns { display: flex; align-items: center; height: 48px; margin-top: 11px; padding: 0 18px 0 17px; }
.pbtns button { width: 48px; height: 36px; }
.pbtns .slim { width: 26px; }
.pbtns .ic { stroke-width: 1.8; }
.off .ic { color: #4b5158; }

/* timeline */
.ttools { height: 60px; flex: none; display: flex; align-items: center; padding-left: 5px; background: linear-gradient(#12171b, #0c1218); }
.ttools button { width: 60px; height: 40px; flex: none; }
.ttools .n48 { width: 48px; }
.ttools .off { color: #4b5158; }
.ttools .green { color: #55e5c5; }
.ttools .lite { color: #eef0f2; }
.ttools .gapl { margin-left: 42px; }
.ttools .ic { stroke-width: 1.9; }
.ttools .bar { width: 2px; height: 24px; margin: 0 12px 0 18px; background: #3b4148; }
.ttools .zoom { flex: none; width: 134px; margin: 0 -2px 0 -3px; background: linear-gradient(90deg, #c8ced5 50%, #24292f 50%) center / 100% 3px no-repeat; }
.zoom::-webkit-slider-thumb { width: 15px !important; height: 15px !important; border-width: 2px !important; }
.tgrid { flex: 1; display: grid; grid-template-columns: 191px minmax(0, 1fr); min-height: 0; }
.heads { display: flex; flex-direction: column; color: #c0c6cd; }
.htop { height: 48px; display: flex; align-items: center; gap: 24px; padding: 0 0 2px 17px; }
.hempty, .lempty { height: 105px; background: #1e2427; }
.hvideo { height: 106px; padding: 24px 0 0 12px; }
.haudio { height: 66px; padding: 4px 0 0 12px; background: #1d2326; }
.hicons { display: grid; grid-template-columns: 53px 47px 46px 20px; align-items: center; height: 26px; }
.tname { display: flex; gap: 3px; align-items: center; font-size: 17px; }
.heads p { margin: 5px 0 0 6px; font-size: 16px; color: #8d9399; }
.tracks { position: relative; overflow: hidden; }
.ruler { position: relative; width: 105%; height: 48px; display: grid; grid-template-columns: repeat(8, 1fr); font-size: 18px; line-height: 46px; color: #b3b9c0; }
.ruler span { margin-left: -50%; margin-right: 50%; text-align: center; }
.ruler .zero { margin-left: 3px; text-align: left; color: #868c93; }
.ticks { position: absolute; inset: 0; width: 100%; height: 48px; shape-rendering: crispEdges; }
.lvideo { height: 106px; }
.laudio { height: 66px; padding: 2px 18px 0 2px; background: #1e2427; }
.clip { position: relative; height: 61px; border: 3px solid #f4f6f7; border-right: 0; border-radius: 7px 0 0 7px; background: #15312b; }
.wave { position: absolute; left: 0; bottom: 2px; width: 100%; height: 34px; }
.vol { position: absolute; left: 0; right: 0; top: 18px; height: 3px; background: #8cecd6; }
.cname { position: absolute; left: 9px; top: 8px; display: flex; align-items: center; gap: 7px; color: #dfe3e7; }
.cname .ic22, .nt { color: #c9ced4; }
.vscroll { position: absolute; right: 0; top: 48px; bottom: 22px; width: 18px; border-radius: 9px; background: #3a4149; }
.hscroll { position: absolute; left: 3px; bottom: 0; width: 186px; height: 2px; border-radius: 2px 2px 0 0; background: #4c545c; }
.playhead { position: absolute; left: 0; top: 0; bottom: 0; width: 2px; background: #ff6464; }
.ph-top { position: absolute; left: 0; top: 0; width: 9px; height: 14px; border-radius: 0 0 7px 0; background: #ff6464; }
.ph-cut { position: absolute; left: 0; top: 100px; width: 17px; height: 53px; border-radius: 0 14px 14px 0; background: #ff6464; color: #fff; display: flex; align-items: center; }
.ph-cut .ic { width: 15px; margin-left: 1px; stroke-width: 1.6; overflow: hidden; }

/* level meter */
.mhead { height: 60px; flex: none; gap: 8px; border-bottom: 2px solid #171c20; color: #bfc5cb; padding-right: 8px; }
.mhead i { border: 4px solid transparent; border-bottom: 6px solid #eef0f2; border-top: 0; }
.mbox { display: flex; padding: 9px 0 0 23px; }
.mscale { position: relative; width: 84px; height: 480px; display: flex; gap: 8px; padding: 5px 0 2px 1px; flex: none; }
.mbar { width: 27px; background: linear-gradient(#141a1d, #0b121a); }
.mticks { position: absolute; inset: 0; width: 84px; height: 480px; }
.mnums { display: flex; flex-direction: column; justify-content: space-between; height: 502px; margin: -11px 0 -11px 4px; font-size: 18px; color: #b3b9c0; }
.lr { display: flex; font-size: 16px; gap: 29px; height: 24px; margin-left: 34px; color: #b3b9c0; }

/* properties */
.props { position: relative; border-radius: 14px 0 0 0; }
.ptabs { height: 60px; flex: none; display: flex; align-items: flex-end; gap: 17px; padding-left: 13px; background: linear-gradient(#12171b, #0c1218); color: #eef0f2; }
.ptabs button { width: 91px; height: 54px; padding-top: 2px; border-radius: 9px 9px 0 0; }
.ptabs .on { background: #20272d; }
.ptabs .on, .pills .on { color: #55e5c5; }
.pills { display: flex; gap: 32px; padding: 12px 0 0 22px; }
.pills button { height: 36px; padding-top: 2px; }
.pills .on { width: 81px; border-radius: 18px; background: #343a41; }
.pclip { position: relative; height: 80px; flex: none; margin: 38px 20px 0 25px; border: 2px solid #173b32; border-radius: 12px; background: #1f4a3f; overflow: hidden; display: flex; align-items: flex-start; padding: 9px 11px 9px 9px; gap: 8px; color: #f4f6f7; }
.pwave { position: absolute; inset: 0; width: 100%; height: 100%; }
.pclip .ic22, .pclip span, .pclip input { position: relative; }
.pclip input[type=range] { flex: none; width: 102px; margin-left: auto; background: linear-gradient(#0c1715, #0c1715) center / 100% 6px no-repeat; }
.sec { height: 60px; flex: none; margin-top: 26px; padding: 0 39px 0 23px; display: flex; align-items: center; justify-content: space-between; background: #2c3339; color: #c8ced5; font-weight: 700; }
.sec h2 { color: #f4f6f7; font-weight: 700; font-size: 19px; }
.sec .ic, .kf { stroke-width: 1.8; color: #aeb4bb; }
.group { height: 108px; flex: none; padding: 0 18px 0 23px; }
.lab { height: 24px; display: flex; align-items: center; gap: 5px; color: #e6e9ec; }
.kf { margin: 0 21px 0 auto; }
.ctl { display: flex; align-items: center; height: 36px; margin-top: 12px; }
.ctl > input[type=range] { margin: 0 27px 0 2px; }
.num { position: relative; width: 108px; flex: none; font-size: 18px; color: #b9bfc5; }
.num input { width: 108px; height: 36px; border: 0; border-radius: 8px; background: #181c1f; padding: 0 15px; outline: 0; display: block; }
.num i { position: absolute; right: 3px; top: 7px; color: #858b92; }
.num .s { right: 10px; }
.num .pc { right: 6px; color: #4b5158; }
.num input:disabled { color: #4b5158; }
.bal > span { font-size: 18px; width: 36px; }
.bal > span + input + span { width: 35px; }
.bal > input[type=range] { margin: 0 28px 0 0; }
.bal > .num { width: 108px; }
.duck { background: linear-gradient(90deg, #4d545b 50%, #353c44 50%) center / 100% 6px no-repeat !important; }
.duck::-webkit-slider-thumb { border-color: #565d65 !important; background: #565d65 !important; }
.toggle { appearance: none; width: 36px; height: 22px; margin: 0 0 0 auto; border: 2px solid #c4cad1; border-radius: 11px; background: radial-gradient(circle at 9px 9px, #c4cad1 6px, transparent 7px); }
.marked { position: relative; }
.marked::after { content: ""; position: absolute; left: 4px; right: 48px; top: -12px; bottom: 24px; border: 6px solid #e51e25; pointer-events: none; }
.set { width: 108px; height: 36px; margin-left: 24px; border-radius: 8px; background: #343a41; color: #c8ced5; }
.eq { height: 102px; }
.fade { margin-top: 0; background: linear-gradient(#2c3339 30%, #20272d); }
.fade h2 { color: #b9bfc5; }
.pfoot { display: flex; justify-content: space-between; padding: 17px 18px 0 23px; color: #c8ced5; font-weight: 500; }
.pfoot button { height: 36px; padding: 0 11px; border-radius: 8px; background: #343a41; }
```
